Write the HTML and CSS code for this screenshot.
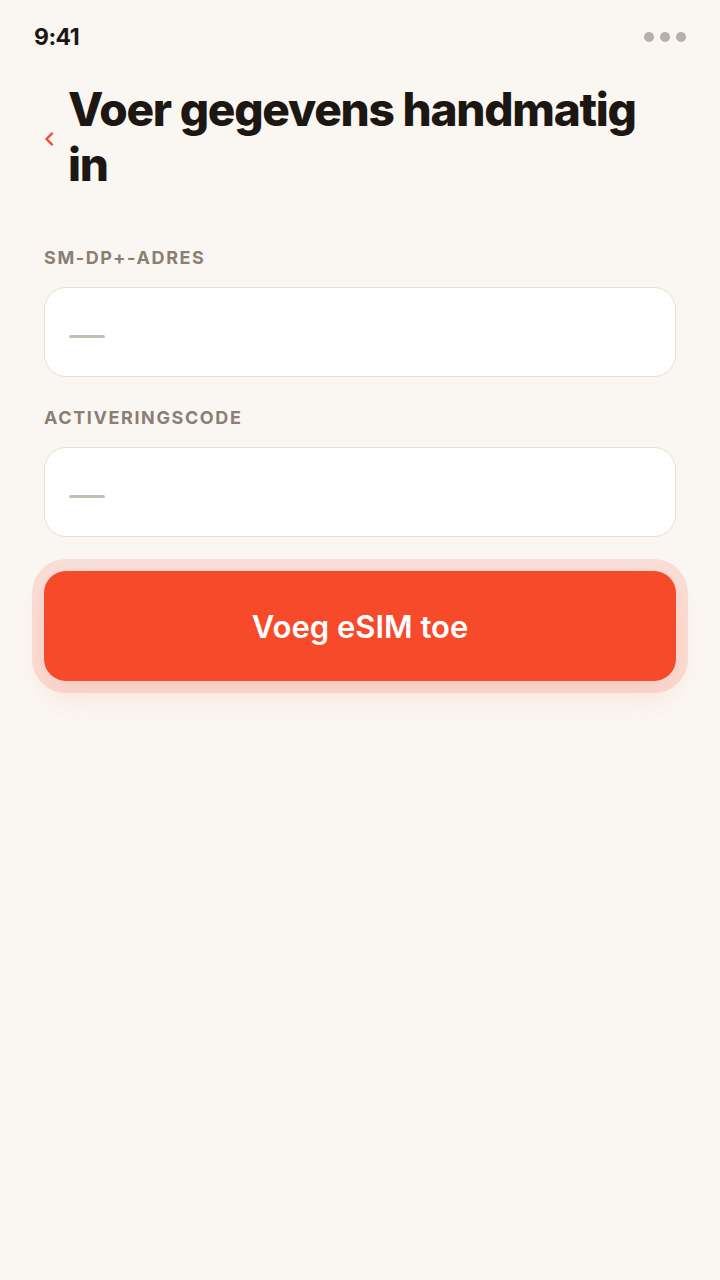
FILE: index.html
```html
<!DOCTYPE html>
<html lang="nl">
<head>
<meta charset="utf-8">
<title>Voer gegevens handmatig in</title>
<link rel="stylesheet" href="styles.css">
</head>
<body>
<div class="screen">
  <div class="status">
    <span class="time">9:41</span>
    <span class="dots"><i></i><i></i><i></i></span>
  </div>
  <div class="header">
    <svg class="back" width="10" height="14" viewBox="0 0 10 14" aria-hidden="true">
      <path d="M8 1.5 L2.5 7 L8 12.5" fill="none" stroke="#f04a2a" stroke-width="2.4" stroke-linecap="round" stroke-linejoin="round"/>
    </svg>
    <h1 class="title">Voer gegevens handmatig in</h1>
  </div>
  <form class="form">
    <label class="label">SM-DP+-ADRES</label>
    <div class="field"><span class="ph"></span></div>
    <label class="label">ACTIVERINGSCODE</label>
    <div class="field"><span class="ph"></span></div>
    <div class="btn-wrap">
      <button type="button" class="btn">Voeg eSIM toe</button>
    </div>
  </form>
</div>
</body>
</html>
```
FILE: styles.css
```css
* { box-sizing: border-box; }
html, body { margin: 0; padding: 0; }
body {
  background: #faf7f2;
  font-family: Inter, "Noto Sans", sans-serif;
  color: #1c1712;
}
.screen { width: 720px; min-height: 1280px; }
.status {
  height: 74px;
  padding: 0 34px 0 34px;
  display: flex;
  align-items: center;
  justify-content: space-between;
}
.time { font-size: 23px; font-weight: 700; letter-spacing: -0.5px; }
.dots { display: flex; gap: 6px; }
.dots i { width: 10px; height: 10px; border-radius: 50%; background: #b8b0a8; display: block; }
.header {
  display: flex;
  align-items: center;
  padding: 8px 44px 0 44px;
  gap: 14px;
}
.back { flex: none; margin-top: 4px; }
.title {
  margin: 0;
  font-size: 46px;
  line-height: 55px;
  font-weight: 800;
  letter-spacing: -1.25px;
  color: #1c1712;
}
.form {
  padding: 0 44px;
  margin-top: 54px;
  display: flex;
  flex-direction: column;
}
.label {
  font-size: 18px;
  font-weight: 700;
  letter-spacing: 1.6px;
  color: #8a7f74;
  line-height: 24px;
  margin-bottom: 17px;
}
.field {
  height: 90px;
  background: #fff;
  border: 1px solid #e8e0d5;
  border-radius: 22px;
  display: flex;
  align-items: center;
  padding-left: 24px;
  margin-bottom: 29px;
}
.ph { width: 36px; height: 3px; border-radius: 2px; background: #c8bfb3; margin-top: 9px; }
.btn-wrap { margin-top: 5px; }
.btn {
  width: 100%;
  height: 110px;
  border: none;
  border-radius: 22px;
  background: #f74a2a;
  color: #fff;
  font-family: Inter, "Noto Sans", sans-serif;
  font-size: 31px;
  font-weight: 600;
  letter-spacing: 0;
  box-shadow: 0 0 0 12px rgba(247, 74, 42, 0.14), 0 16px 30px rgba(247, 74, 42, 0.12);
}
```
